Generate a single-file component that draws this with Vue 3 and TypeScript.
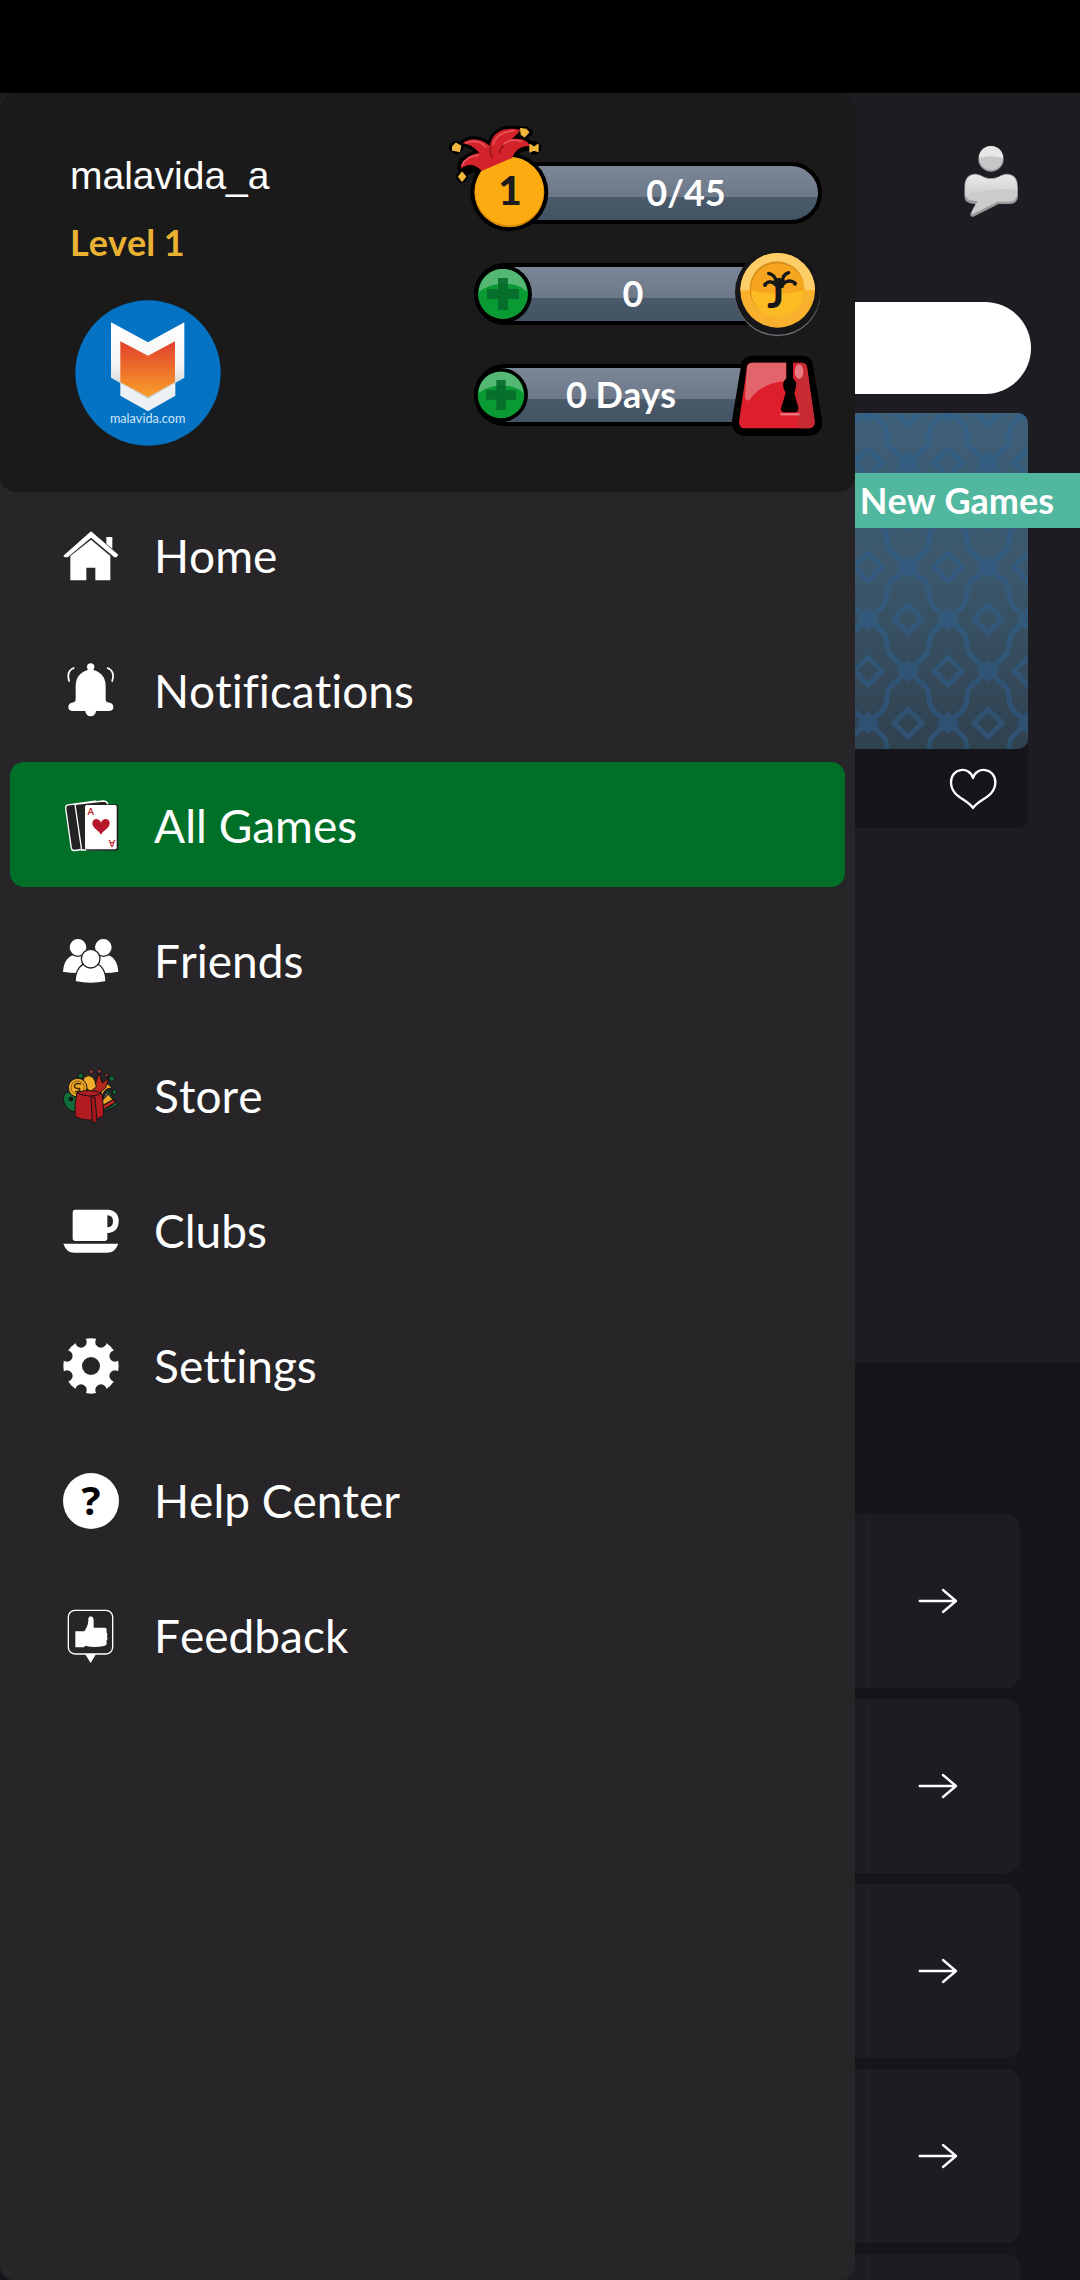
<script setup lang="ts">
interface MenuItem {
  id: string
  label: string
  box: string
  active?: boolean
}

const menu: MenuItem[] = [
  { id: 'home', label: 'Home', box: '188 80 168 168' },
  { id: 'bell', label: 'Notifications', box: '188 485 168 168' },
  { id: 'cards', label: 'All Games', box: '188 890 168 168', active: true },
  { id: 'friends', label: 'Friends', box: '68 94 168 168' },
  { id: 'store', label: 'Store', box: '68 499 168 168' },
  { id: 'clubs', label: 'Clubs', box: '68 904 168 168' },
  { id: 'gear', label: 'Settings', box: '68 139 168 168' },
  { id: 'help', label: 'Help Center', box: '68 544 168 168' },
  { id: 'feedback', label: 'Feedback', box: '68 949 168 168' }
]

const notchAngles = [22.5, 67.5, 112.5, 157.5, 202.5, 247.5, 292.5, 337.5]
const rows = [1, 2, 3, 4, 5]
</script>

<template>
  <div class="screen">
    <div class="status-bar"></div>
    <div class="stage">
      <main class="page">
        <header class="page-head">
          <button class="icon-button" type="button" aria-label="Chat">
            <svg width="56" height="72" viewBox="368 194 168 216">
              <defs>
                <linearGradient id="silver" x1="0" y1="0" x2="0" y2="1">
                  <stop offset="0" stop-color="#e9e9e9" />
                  <stop offset="1" stop-color="#cfcfcf" />
                </linearGradient>
              </defs>
              <circle cx="452" cy="236" r="38" fill="#999" />
              <circle cx="452" cy="233" r="36" fill="#c6c6c6" />
              <path d="M416 233a36 36 0 0 1 72 0q-36-10-72 0z" fill="#e6e6e6" />
              <path d="M372 322q0-42 34-42c14 0 24 13 46 13s32-13 46-13q35 0 35 42v24q0 25-26 25h-32l-76 38q-12 2-8-10l14-28q-33 0-33-24z" fill="#999" />
              <path d="M375 320q0-37 31-37c14 0 24 13 46 13s32-13 46-13q32 0 32 37v22q0 22-24 22h-34l-76 38q-4 0-2-6l18-34q-37 2-37-20z" fill="#cbcbcb" />
              <path d="M375 320q0-37 31-37c14 0 24 13 46 13s32-13 46-13q32 0 32 37v8q-90-8-155 18z" fill="url(#silver)" />
            </svg>
          </button>
        </header>
        <input class="search" type="search" aria-label="Search games" />
        <article class="game">
          <div class="game-cover">
            <svg class="game-pattern" width="100%" height="100%" aria-hidden="true">
              <defs>
                <linearGradient id="cover" x1="0" y1="0" x2="0" y2="1">
                  <stop offset="0" stop-color="#3e6078" />
                  <stop offset="0.5" stop-color="#3a566a" />
                  <stop offset="1" stop-color="#30414f" />
                </linearGradient>
                <pattern id="lattice" x="16" y="50" width="80" height="104" patternUnits="userSpaceOnUse">
                  <g fill="none" stroke="#2c5f92" stroke-width="5">
                    <path d="M40 0L24 14Q19 18 19 26Q19 36 14 40L0 52L14 64Q19 68 19 78Q19 86 24 90L40 104L56 90Q61 86 61 78Q61 68 66 64L80 52L66 40Q61 36 61 26Q61 18 56 14z" />
                    <path d="M40 38L54 52L40 66L26 52z" />
                    <path d="M0-14L14 0L0 14L-14 0zM80-14L94 0L80 14L66 0zM0 90L14 104L0 118L-14 104zM80 90L94 104L80 118L66 104z" />
                    <path d="M40-8L48 0L40 8L32 0zM40 96L48 104L40 112L32 104zM0 44L8 52L0 60L-8 52zM80 44L88 52L80 60L72 52z" />
                  </g>
                </pattern>
              </defs>
              <rect width="100%" height="100%" fill="url(#cover)" />
              <rect width="100%" height="100%" fill="url(#lattice)" opacity="0.5" />
            </svg>
            <span class="ribbon">New Games</span>
          </div>
          <footer class="game-foot">
            <button class="icon-button" type="button" aria-label="Add to favourites">
              <svg width="50" height="44" viewBox="324 860 150 132" fill="none" stroke="#fff" stroke-width="7" stroke-linejoin="round">
                <path d="M399 983C382 956 333 950 333 906C333 862 389 856 399 893C409 856 466 862 466 906C466 950 416 956 399 983z" />
              </svg>
            </button>
          </footer>
        </article>
        <section class="list">
          <a v-for="row in rows" :key="row" class="row" href="#" aria-label="Open">
            <span class="row-arrow">
              <svg width="40" height="26" viewBox="296 743 120 78" fill="none" stroke="#fff" stroke-width="7" stroke-linecap="round" stroke-linejoin="round">
                <path d="M301 782H410M371 749L410 782L371 815" />
              </svg>
            </span>
          </a>
        </section>
      </main>

      <aside class="drawer">
        <header class="profile">
          <div class="who">
            <span class="name">malavida_a</span>
            <span class="level">Level 1</span>
            <svg class="avatar" width="146" height="146" viewBox="226 659 438 438" role="img" aria-label="Avatar">
              <defs>
                <linearGradient id="flame" x1="0" y1="0" x2="0" y2="1">
                  <stop offset="0" stop-color="#e23f2b" />
                  <stop offset="1" stop-color="#f8a02a" />
                </linearGradient>
                <linearGradient id="shield" x1="0" y1="0" x2="0" y2="1">
                  <stop offset="0" stop-color="#fff" />
                  <stop offset="0.55" stop-color="#f4f4f4" />
                  <stop offset="1" stop-color="#c4c8cc" />
                </linearGradient>
              </defs>
              <circle cx="445" cy="878" r="218" fill="#0473c4" />
              <path d="M362 880H527V946L445 993L362 946z" fill="#eef1f4" />
              <path d="M334 726L445 786L554 726V892L445 955L334 892z" fill="url(#shield)" />
              <path d="M362 783L445 826L526 783V906L445 950L362 906z" fill="url(#flame)" />
              <text x="444" y="1028" class="avatar-text" text-anchor="middle">malavida.com</text>
            </svg>
          </div>

          <div class="stats">
            <div class="pill pill-level">
              <svg class="badge" width="104" height="112" viewBox="48 66 312 336">
                <path d="M150 212L95 200L96 228M150 212C100 170 92 170 90 210M97 130C130 105 165 125 180 138C185 95 225 78 275 90C262 103 250 112 245 118C275 112 300 125 312 143C285 140 262 145 246 172L155 213C135 190 112 190 92 206C95 180 115 165 148 158C135 145 120 132 97 130z" fill="#000" stroke="#000" stroke-width="18" stroke-linejoin="round" />
                <path d="M68 142h22M78 134v16M276 97h20M286 90v14M302 143h20M312 134v18M90 230h12M96 222v16" stroke="#000" stroke-width="24" stroke-linecap="round" />
                <circle cx="238" cy="277" r="117" fill="#000" />
                <circle cx="238" cy="277" r="105" fill="#d98a05" />
                <circle cx="238" cy="273" r="103" fill="#fcab10" />
                <path d="M155 213C135 190 112 190 92 206C95 180 115 165 148 158C135 145 120 132 97 130C130 105 165 125 180 138C185 95 225 78 272 90C262 103 250 112 245 118C275 112 295 125 300 138C278 137 258 145 246 174z" fill="#d4222b" />
                <path d="M96 196q12-28 48-30M108 129q34-14 60 12M190 132q8-34 62-40M222 132q20-18 52-8" fill="none" stroke="#e8525a" stroke-width="5" stroke-linecap="round" />
                <path d="M182 140q-4 20 6 34M222 136q-10 8-14 24" fill="none" stroke="#8b1219" stroke-width="4" />
                <path d="M68 140L78 130L92 138L88 154L68 150zM272 86L288 88L296 97L284 110L274 103zM300 134L312 142L324 134V154L312 150L300 156zM96 217L107 230L96 243L86 230z" fill="#f0b73c" stroke="#f0b73c" stroke-width="4" stroke-linejoin="round" />
                <text x="240" y="316" class="badge-text" text-anchor="middle">1</text>
              </svg>
              <span class="value value-level">0/45</span>
            </div>

            <div class="pill pill-short">
              <button class="plus" type="button" aria-label="Get coins">
                <svg width="58" height="58" viewBox="0 0 58 58">
                  <circle cx="29" cy="29" r="29" fill="#000" />
                  <circle cx="29" cy="29" r="25" fill="#0a9a33" />
                  <path d="M5 27C6 12 17 4 29 4S52 12 53 27C44 16 18 16 5 27z" fill="#55b774" />
                  <path d="M24 13h10v11h11v10H34v11H24V34H13V24h11z" fill="#06672a" opacity="0.85" />
                </svg>
              </button>
              <span class="value">0</span>
              <svg class="token" width="88" height="88" viewBox="914 456 264 264">
                <circle cx="1045" cy="587" r="128" fill="#6d6d74" />
                <circle cx="1045" cy="582" r="128" fill="#17171a" />
                <circle cx="1045" cy="577" r="112" fill="#f8b02d" />
                <path d="M933 577a112 112 0 0 1 224 0z" fill="#fdcd67" />
                <circle cx="1043" cy="572" r="82" fill="#d98f1b" />
                <circle cx="1045" cy="577" r="80" fill="#fbbb22" />
                <path d="M965 577a80 80 0 0 1 160 0q-80 20-160 0z" fill="#f7a51f" />
                <path d="M1036 558Q1022 544 1008 558M1040 548Q1036 530 1018 526M1060 548Q1060 530 1078 524M1062 558Q1076 542 1096 554" fill="none" stroke="#17171a" stroke-width="10" stroke-linecap="round" />
                <path d="M1030 550Q1049 528 1068 550L1062 570H1040z" fill="#17171a" />
                <circle cx="1007" cy="561" r="6" fill="#17171a" />
                <circle cx="1097" cy="557" r="6" fill="#17171a" />
                <text x="1039" y="631" class="coin-text" text-anchor="middle">J</text>
              </svg>
            </div>

            <div class="pill pill-short">
              <button class="plus" type="button" aria-label="Get membership days">
                <svg width="54" height="54" viewBox="0 0 58 58">
                  <circle cx="29" cy="29" r="29" fill="#000" />
                  <circle cx="29" cy="29" r="25" fill="#0a9a33" />
                  <path d="M5 27C6 12 17 4 29 4S52 12 53 27C44 16 18 16 5 27z" fill="#55b774" />
                  <path d="M24 13h10v11h11v10H34v11H24V34H13V24h11z" fill="#06672a" opacity="0.85" />
                </svg>
              </button>
              <span class="value value-days">0 Days</span>
              <svg class="token" width="90" height="81" viewBox="909 158 270 243">
                <path d="M970 160H1120Q1146 162 1151 184L1179 354Q1180 398 1142 400H946Q908 398 909 354L937 184Q942 162 970 160z" fill="#000" />
                <path d="M968 181H1118Q1132 182 1134 194L1157 356Q1158 376 1142 378H944Q930 376 930 358L954 194Q956 182 968 181z" fill="#dc1f2a" />
                <path d="M968 181H1072V236Q1000 240 962 292Q948 300 948 280L954 194Q956 182 968 181z" fill="#e2656b" />
                <path d="M1098 181H1118Q1132 182 1134 194L1157 356Q1158 376 1142 378H1110z" fill="#c62a33" />
                <ellipse cx="1110" cy="208" rx="13" ry="22" fill="#e77a80" />
                <path d="M1054 336H1112" stroke="#ee8086" stroke-width="6" />
                <path d="M1072 172H1092V228Q1106 240 1100 258L1096 272L1108 316Q1108 330 1096 330H1068Q1054 330 1056 318L1070 272L1064 258Q1058 240 1072 228z" fill="#000" />
              </svg>
            </div>
          </div>
        </header>

        <nav class="menu">
          <a v-for="item in menu" :key="item.id" href="#" class="menu-item" :class="{ active: item.active }">
            <svg class="menu-icon" width="56" height="56" :viewBox="item.box" fill="#fff" aria-hidden="true">
              <template v-if="item.id === 'home'">
                <path d="M318 107H336V142L318 127z" />
                <path d="M272 90L354 160L349 168H342L272 109L202 168H193L189 163z" />
                <path d="M272 115L330 164V237H285V199H258V237H210V164z" />
              </template>
              <template v-else-if="item.id === 'bell'">
                <circle cx="271" cy="497" r="11" />
                <path d="M226 553a45 48 0 0 1 90 0V596Q318 604 328 604Q339 606 339 617T328 629H287a16 16 0 1 1-32 0H215Q204 628 204 617T215 604Q226 604 226 594z" />
                <path d="M222 499Q196 508 207 541M320 499Q346 508 335 541" fill="none" stroke="#fff" stroke-width="5" />
              </template>
              <template v-else-if="item.id === 'cards'">
                <rect x="204" y="905" width="98" height="138" rx="9" transform="rotate(-8 250 974)" fill="#232323" stroke="#fff" stroke-width="4" />
                <path d="M224 909L308 899Q320 899 323 910V1044L244 1046z" fill="#232323" stroke="#fff" stroke-width="4" />
                <rect x="256" y="909" width="98" height="139" rx="6" fill="#232323" />
                <rect x="254" y="911" width="95" height="133" rx="5" />
                <path d="M302 1000C296 988 276 981 276 966C276 950 297 949 302 964C307 949 328 950 328 966C328 981 308 988 302 1000z" fill="#b5182b" />
                <text x="271" y="942" class="card-text" text-anchor="middle">A</text>
                <text x="-335" y="-1015" class="card-text" text-anchor="middle" transform="rotate(180)">A</text>
              </template>
              <g v-else-if="item.id === 'friends'" stroke="#272528" stroke-width="4">
                <path d="M66 212Q68 160 112 154Q156 160 160 212Q112 220 66 212z" />
                <path d="M236 212Q234 160 190 154Q146 160 142 212Q190 220 236 212z" />
                <circle cx="113" cy="137" r="27" />
                <circle cx="189" cy="137" r="27" />
                <path d="M104 240Q106 186 151 180Q196 186 197 240Q151 250 104 240z" />
                <circle cx="151" cy="171" r="28" />
              </g>
              <g v-else-if="item.id === 'store'" stroke="#161214" stroke-width="3" stroke-linejoin="round">
                <path d="M130 580Q70 556 69 588T104 632z" fill="#116e38" />
                <circle cx="92" cy="592" r="6" fill="#161214" />
                <path d="M200 564L234 608L190 632V580z" fill="#116e38" />
                <path d="M196 570L228 602L190 628V584z" fill="#4b5257" />
                <path d="M204 578L218 594L186 612V596z" fill="#e9a72b" />
                <path d="M218 594L226 602L188 624V612z" fill="#c3261f" />
                <path d="M150 580Q184 520 216 560Q192 556 186 584z" fill="#f1ab2b" />
                <path d="M138 574L146 540L164 548L176 514L186 544L206 528L196 558L172 580z" fill="#b5291f" />
                <path d="M132 526Q162 510 168 556L150 570Q120 548 132 526z" fill="#f1ab2b" />
                <circle cx="153" cy="510" r="6" fill="#a13a35" />
                <circle cx="177" cy="509" r="6" fill="#a13a35" />
                <circle cx="198" cy="520" r="5" fill="#a13a35" />
                <circle cx="121" cy="522" r="8" fill="#116e38" />
                <circle cx="214" cy="531" r="8" fill="#116e38" />
                <circle cx="222" cy="571" r="7" fill="#116e38" />
                <circle cx="112" cy="558" r="28" fill="#f0aa24" />
                <circle cx="112" cy="558" r="20" fill="none" stroke="#8a5b0c" />
                <path d="M122 547Q104 542 102 554Q104 562 118 560Q122 570 104 570" fill="none" stroke="#3a2706" stroke-width="4" />
                <path d="M110 572Q150 560 184 574Q190 610 190 642Q148 668 104 644Q102 606 110 572z" fill="#b21c20" />
                <path d="M110 574Q148 592 184 575" fill="none" />
                <path d="M152 586H164L170 660L156 664z" fill="#a3161b" />
              </g>
              <template v-else-if="item.id === 'clubs'">
                <path d="M103 924H202Q235 926 235 958Q235 992 201 994V1010Q201 1018 193 1018H105Q97 1018 97 1010V932Q97 924 103 924zM201 941V977Q218 977 218 959T201 941z" fill-rule="evenodd" />
                <path d="M69 1026H234Q224 1053 200 1053H102Q78 1053 69 1026z" />
              </template>
              <template v-else-if="item.id === 'gear'">
                <circle cx="152" cy="223" r="83" />
                <circle v-for="angle in notchAngles" :key="angle" cx="152" cy="145" r="17" fill="#272528" :transform="`rotate(${angle} 152 223)`" />
                <circle cx="152" cy="223" r="27" fill="#272528" />
              </template>
              <template v-else-if="item.id === 'help'">
                <circle cx="152" cy="628" r="84" />
                <text x="152" y="671" class="help-text" text-anchor="middle">?</text>
              </template>
              <template v-else>
                <rect x="84" y="956" width="133" height="131" rx="20" fill="none" stroke="#fff" stroke-width="4" />
                <path d="M134 1087H167L151 1114z" />
                <path d="M105 1019H132Q146 998 144 980Q146 974 152 974Q160 976 160 984V1008H194Q202 1010 198 1020Q204 1028 200 1034Q204 1042 198 1048Q202 1058 194 1062Q160 1070 136 1062L130 1067H105z" />
              </template>
            </svg>
            <span>{{ item.label }}</span>
          </a>
        </nav>
      </aside>
    </div>
  </div>
</template>

<style>
body {
  background: #000;
}
</style>

<style scoped>
.screen {
  display: flex;
  flex-direction: column;
  height: 100vh;
  overflow: hidden;
  background: #1c1c22;
  font-family: Lato, "Liberation Sans", sans-serif;
  font-kerning: none;
  font-variant-ligatures: none;
  color: #fff;
}

.status-bar {
  flex: none;
  height: 93px;
  background: #000;
}

.stage {
  flex: 1;
  min-height: 0;
  display: grid;
  grid-template: minmax(0, 1fr) / minmax(0, 1fr);
}

.page,
.drawer {
  grid-area: 1 / 1;
}

svg {
  display: block;
  flex: none;
}

a {
  color: inherit;
  text-decoration: none;
}

button {
  padding: 0;
  border: 0;
  background: none;
}

/* Page behind the drawer */
.page {
  display: flex;
  flex-direction: column;
  overflow: hidden;
}

.page-head {
  flex: none;
  display: flex;
  justify-content: flex-end;
  box-sizing: border-box;
  height: 209px;
  padding: 52px 61px 0 0;
}

.icon-button {
  align-self: flex-start;
}

.search {
  flex: none;
  box-sizing: border-box;
  height: 92px;
  margin: 0 49px 19px;
  padding: 0 40px;
  border: 0;
  border-radius: 46px;
  background: #fff;
  font-size: 36px;
}

.game {
  flex: none;
  margin: 0 52px 535px;
  border-radius: 10px;
  background: #15151b;
}

.game-cover {
  position: relative;
  height: 336px;
}

.game-pattern {
  border-radius: 10px;
}

.ribbon {
  position: absolute;
  top: 60px;
  right: -52px;
  width: 300px;
  box-sizing: border-box;
  padding-right: 26px;
  background: #52b79f;
  font-size: 36px;
  font-weight: 700;
  line-height: 55px;
  text-align: right;
}

.game-foot {
  display: flex;
  justify-content: flex-end;
  height: 79px;
  padding: 18px 30px 0 0;
  box-sizing: border-box;
}

.list {
  flex: none;
  display: flex;
  flex-direction: column;
  gap: 11px;
  padding: 151px 60px 0;
  background: #15151a;
}

.row {
  display: flex;
  justify-content: flex-end;
  height: 174px;
  border-radius: 14px;
  background: #1c1c22;
}

.row-arrow {
  display: flex;
  align-items: center;
  justify-content: center;
  width: 152px;
  padding-right: 14px;
  box-sizing: border-box;
  border-left: 2px solid #202025;
}

/* Drawer */
.drawer {
  z-index: 1;
  width: calc(100% - 225px);
  overflow: hidden;
  border-radius: 14px;
  background: #272528;
}

.profile {
  display: flex;
  justify-content: space-between;
  box-sizing: border-box;
  height: 399px;
  padding: 0 33px 0 70px;
  border-radius: 16px;
  background: #1a1a1a;
}

.who {
  display: flex;
  flex-direction: column;
  padding-top: 60px;
}

.name {
  font-family: "Liberation Sans", Arial, sans-serif;
  font-size: 39px;
  line-height: 46px;
}

.level {
  margin-top: 20px;
  font-size: 36px;
  font-weight: 700;
  line-height: 46px;
  color: #e9b233;
}

.avatar {
  margin: 35px 0 0 5px;
}

.avatar-text {
  fill: #cfe6f7;
  font-size: 38px;
}

.badge-text {
  fill: #1c1c1c;
  font-size: 122px;
  font-weight: 900;
}

.coin-text {
  fill: #17171a;
  font-size: 116px;
  font-weight: 900;
}

.card-text {
  fill: #b5182b;
  font-size: 28px;
  font-weight: 700;
}

.help-text {
  fill: #000;
  font-family: "Open Sans", sans-serif;
  font-size: 120px;
  font-weight: 700;
}

.stats {
  display: flex;
  flex-direction: column;
  gap: 39px;
  width: 348px;
  padding-top: 69px;
}

.pill {
  display: flex;
  align-items: center;
  box-sizing: border-box;
  height: 62px;
  border: 4px solid #000;
  border-radius: 31px;
  background: linear-gradient(#7b8796, #6d7988 57%, #495a6b 57%, #435364);
}

.pill-level {
  margin-left: 16px;
}

.pill-short {
  margin-right: 20px;
}

.badge {
  align-self: flex-start;
  margin: -44px 0 0 -48px;
}

.plus {
  margin: -4px 0 -4px -4px;
}

.token {
  margin: -20px -24px -20px 0;
}

.value {
  flex: 1;
  padding-bottom: 2px;
  font-size: 36px;
  font-weight: 700;
  line-height: 46px;
  text-align: center;
}

.value-level {
  padding-left: 4px;
}

.value-days {
  padding-right: 18px;
}

.menu {
  display: flex;
  flex-direction: column;
  gap: 10px;
  padding: 0 10px;
}

.menu-item {
  display: flex;
  align-items: center;
  gap: 35px;
  box-sizing: border-box;
  height: 125px;
  padding: 2px 0 0 53px;
  border-radius: 14px;
  font-size: 46px;
  line-height: 56px;
}

.menu-icon {
  overflow: visible;
}

.active {
  background: #007029;
}
</style>
